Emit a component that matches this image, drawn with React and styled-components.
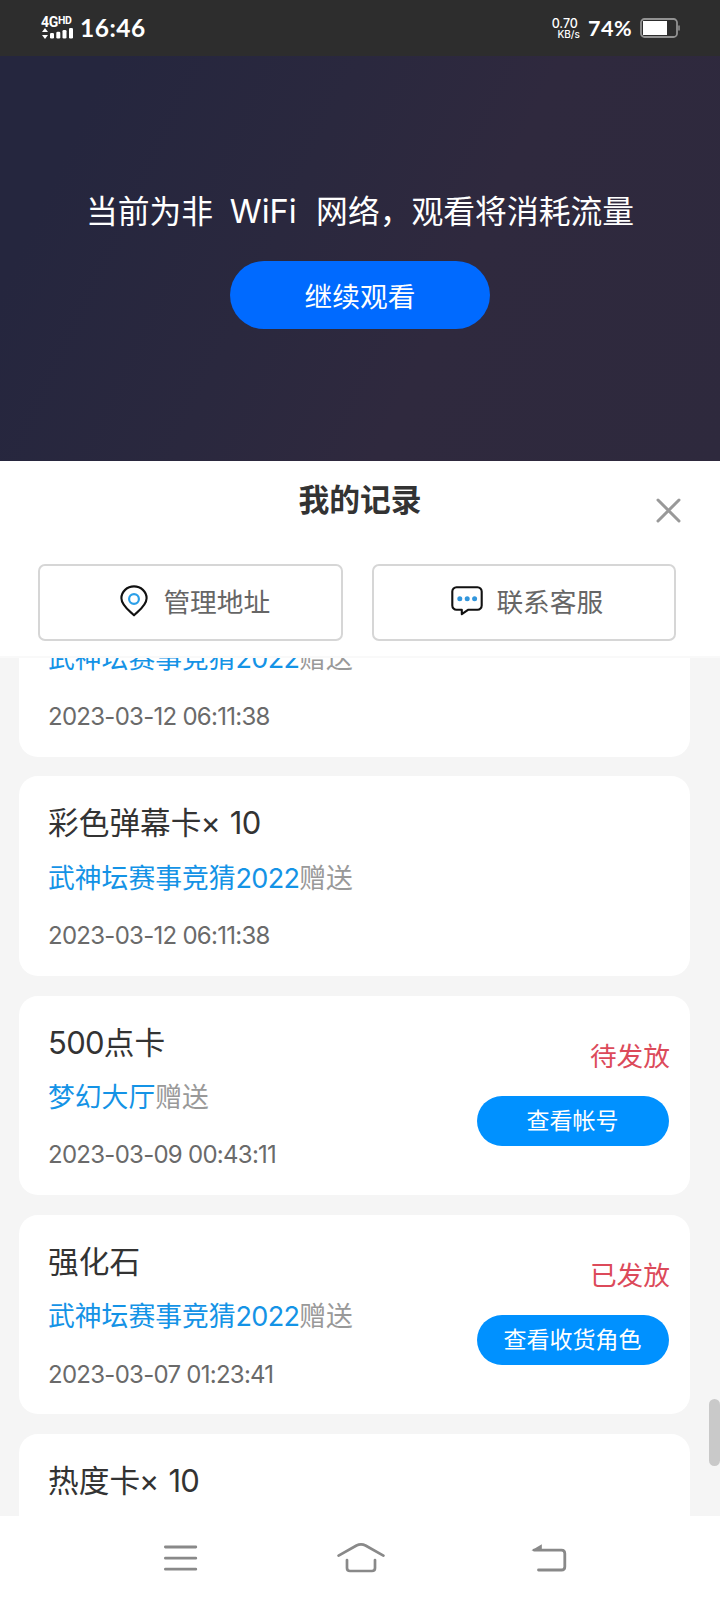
import React from "react";
import styled, { createGlobalStyle } from "styled-components";

const GlobalStyle = createGlobalStyle`
  * {
    box-sizing: border-box;
  }
  body {
    margin: 0;
    background: #ffffff;
    font-family: "Noto Sans CJK SC", sans-serif;
  }
  button {
    padding: 0;
    border: none;
    background: none;
    font-family: inherit;
  }
`;

const Screen = styled.div`
  display: flex;
  flex-direction: column;
  width: 720px;
  height: 1600px;
  overflow: hidden;
`;

/* status bar */
const StatusBar = styled.header`
  display: flex;
  align-items: center;
  justify-content: space-between;
  height: 56px;
  padding: 0 40px 0 41px;
  background: #2d2d2d;
  color: #ffffff;
  font-family: Lato, sans-serif;
`;
const StatusGroup = styled.div`
  display: flex;
  align-items: center;
`;
const Network = styled.div`
  width: 32px;
  margin-right: 7px;
`;
const NetworkLabel = styled.div`
  display: flex;
  height: 11px;
  font-family: Roboto, sans-serif;
  font-weight: 700;
  font-size: 14px;
  line-height: 10px;
  letter-spacing: -0.3px;
`;
const NetworkSup = styled.span`
  font-size: 10.5px;
  line-height: 7px;
`;
const Clock = styled.span`
  font-family: Lato, sans-serif;
  font-weight: 700;
  font-size: 24.5px;
  line-height: 28px;
  letter-spacing: 0.5px;
`;
const Speed = styled.div`
  display: flex;
  flex-direction: column;
  align-items: flex-end;
  margin-right: 8px;
  font-family: Inter, sans-serif;
  font-weight: 500;
  font-size: 12.5px;
  line-height: 12px;
`;
const SpeedValue = styled.span`
  margin-right: 2px;
`;
const SpeedUnit = styled.span`
  font-size: 10px;
  line-height: 9px;
`;
const Percent = styled.span`
  margin-right: 8px;
  font-weight: 700;
  font-size: 21.5px;
  line-height: 28px;
  letter-spacing: 0.5px;
`;

/* video area */
const Video = styled.section`
  display: flex;
  flex-direction: column;
  align-items: center;
  height: 405px;
  padding-top: 129px;
  background: linear-gradient(115deg, #25263e 12%, #2a283e 40%, #2f293e 62%, #2e293d 100%);
  color: #ffffff;
`;
const Notice = styled.p`
  height: 50px;
  margin: 0;
  font-size: 31.8px;
  line-height: 48px;
  white-space: nowrap;
`;
const Latin = styled.span`
  display: inline-block;
  width: 103px;
  padding-right: 3px;
  font-family: Inter, sans-serif;
  font-size: 32.5px;
  text-align: center;
`;
const ContinueButton = styled.button`
  width: 260px;
  height: 68px;
  margin-top: 26px;
  border-radius: 34px;
  background: #006aff;
  color: #ffffff;
  font-size: 27.7px;
  line-height: 40px;
`;

/* records panel */
const Panel = styled.section`
  height: 195px;
  background: #ffffff;
`;
const PanelHeader = styled.div`
  display: grid;
  grid-template-columns: 1fr auto 1fr;
  height: 103px;
  padding: 15px 39px 0;
`;
const PanelTitle = styled.h1`
  grid-column: 2;
  margin: 0;
  color: #333333;
  font-weight: 700;
  font-size: 30.8px;
  line-height: 44px;
`;
const CloseButton = styled.button`
  justify-self: end;
  width: 25px;
  height: 25px;
  margin-top: 22px;
`;
const Actions = styled.div`
  display: flex;
  gap: 29px;
  padding-left: 38px;
`;
const ActionButton = styled.button`
  display: flex;
  align-items: center;
  justify-content: center;
  gap: ${props => props.$gap};
  width: 304.5px;
  height: 77px;
  padding: 0 0 3px ${props => props.$indent};
  border: 2px solid #d6d6d6;
  border-radius: 7px;
  color: #666666;
  font-size: 26.7px;
  line-height: 40px;
`;

const List = styled.main`
  position: relative;
  height: 860px;
  overflow: hidden;
  border-top: 2px solid #f9f9f9;
  background: #f5f5f5;
`;
const Scroller = styled.div`
  display: flex;
  flex-direction: column;
  gap: 19.8px;
  width: 671px;
  margin: -101px 0 0 19px;
`;
const Card = styled.article`
  display: flex;
  flex: none;
  justify-content: space-between;
  height: 199.5px;
  padding: 0 20px 0 29px;
  border-radius: 19px;
  background: #ffffff;
`;
const Info = styled.div`
  padding-top: 23px;
  white-space: nowrap;
`;
const ItemName = styled.h2`
  height: 44px;
  margin: 0;
  color: #333333;
  font-weight: 400;
  font-size: 30.7px;
  line-height: 44px;
`;
const Source = styled.p`
  height: 40px;
  margin: 13.4px 0 0;
  color: #999999;
  font-size: 26.8px;
  line-height: 40px;
`;
const SourceName = styled.span`
  color: #1493e6;
`;
const Digits = styled.span`
  font-family: Inter, sans-serif;
  font-size: 1.01em;
  line-height: 1;
  letter-spacing: -0.7px;
`;
const Times = styled.span`
  margin-right: 9px;
  margin-left: -1px;
  font-family: Inter, sans-serif;
  line-height: 1;
`;
const Time = styled.time`
  display: block;
  margin-top: 22.4px;
  color: #6a6a6a;
  font-family: Inter, sans-serif;
  font-size: 24px;
  line-height: 34px;
  letter-spacing: -0.73px;
`;
const Side = styled.div`
  display: flex;
  flex-direction: column;
  align-items: flex-end;
  padding-top: 39px;
`;
const State = styled.span`
  color: #dc4a5a;
  font-size: 26.7px;
  line-height: 40px;
`;
const DetailButton = styled.button`
  width: 192px;
  height: 50px;
  margin: 21.5px 1px 0 0;
  padding: 0 1px 4px 0;
  border-radius: 25px;
  background: #0091ff;
  color: #ffffff;
  font-size: 23px;
  line-height: 34px;
`;
const ScrollThumb = styled.div`
  position: absolute;
  top: 741px;
  right: 0;
  width: 11px;
  height: 67px;
  border-radius: 6px;
  background: #c9c9c9;
`;

/* system navigation */
const NavBar = styled.nav`
  display: flex;
  align-items: center;
  justify-content: space-between;
  height: 84px;
  padding: 0 153px 0 163px;
  background: #ffffff;

  svg:nth-child(2) {
    margin-right: 8px;
  }
`;

const SignalIcon = () => (
  <svg width="32" height="11" viewBox="0 0 32 11" fill="#fff" display="block">
    <path d="M4 0l3 4H1zM4 11l3-4H1z" />
    <rect x="9" y="5" width="4" height="5.5" rx="1.3" />
    <rect x="15.3" y="3.8" width="4" height="6.7" rx="1.3" />
    <rect x="21.5" y="2" width="4" height="8.5" rx="1.3" />
    <rect x="28" y="0" width="4" height="10.5" rx="1.3" />
  </svg>
);

const BatteryIcon = () => (
  <svg width="40" height="20" viewBox="0 0 40 20" fill="none">
    <rect x="1" y="1" width="36" height="18" rx="3.5" stroke="#929292" strokeWidth="1.8" />
    <rect x="3" y="3" width="24" height="14" fill="#fff" />
    <path d="M39 7.5v5" stroke="#929292" strokeWidth="1.5" />
  </svg>
);

const CloseIcon = () => (
  <svg width="25" height="25" viewBox="0 0 25 25" stroke="#999" strokeWidth="3" strokeLinecap="round" display="block">
    <path d="M2 2l21 21M23 2L2 23" />
  </svg>
);

const PinIcon = () => (
  <svg width="28" height="32" viewBox="0 0 28 32" fill="none">
    <path
      d="M14 30.3C11 27 1.4 20.8 1.4 13.2a12.6 11.8 0 0 1 25.2 0C26.6 20.8 17 27 14 30.3z"
      stroke="#111"
      strokeWidth="2.1"
      strokeLinejoin="round"
    />
    <circle cx="14" cy="14" r="4.9" stroke="#2b9fe8" strokeWidth="2.2" />
  </svg>
);

const ChatIcon = () => (
  <svg width="32" height="30" viewBox="0 0 32 30" fill="none">
    <path
      d="M5.5 1.2h21a4.2 4.2 0 0 1 4.2 4.2v14.2a4.2 4.2 0 0 1-4.2 4.2H17l-6.2 4.4v-4.4H5.5a4.2 4.2 0 0 1-4.2-4.2V5.4a4.2 4.2 0 0 1 4.2-4.2z"
      stroke="#111"
      strokeWidth="2.1"
      strokeLinejoin="round"
    />
    <g fill="#3296dc">
      <circle cx="8.8" cy="12.8" r="2.5" />
      <circle cx="16.2" cy="12.8" r="2.5" />
      <circle cx="23.6" cy="12.8" r="2.5" />
    </g>
  </svg>
);

const MenuIcon = () => (
  <svg width="35" height="28" viewBox="0 0 35 28" stroke="#898989" strokeWidth="2.8" strokeLinecap="round">
    <path d="M2.4 3h30.4M2.4 14.2h30.4M2.4 25.2h30.4" />
  </svg>
);

const HomeIcon = () => (
  <svg width="48" height="30" viewBox="0 0 48 30" fill="none" stroke="#898989" strokeWidth="2.7" strokeLinecap="round" strokeLinejoin="round">
    <path d="M1.6 12.7L19.5 2.5Q24 .4 28.5 2.5L46.4 12.7" />
    <path d="M10 17v8q0 3 3 3h22q3 0 3-3v-8" />
  </svg>
);

const BackIcon = () => (
  <svg width="36" height="29" viewBox="0 0 36 29" fill="none" stroke="#898989" strokeWidth="2.8" strokeLinecap="round">
    <path d="M3 6.1h27.5q3.3 0 3.3 3.3v13.3q0 3.3-3.3 3.3H7.5" />
    <path d="M.4 6.5L10.8.2v6.6z" fill="#898989" stroke="none" />
  </svg>
);

const records = [
  { source: "武神坛赛事竞猜", year: "2022", time: "2023-03-12 06:11:38" },
  { name: "彩色弹幕卡", count: "10", source: "武神坛赛事竞猜", year: "2022", time: "2023-03-12 06:11:38" },
  { prefix: "500", name: "点卡", source: "梦幻大厅", time: "2023-03-09 00:43:11", state: "待发放", action: "查看帐号" },
  { name: "强化石", source: "武神坛赛事竞猜", year: "2022", time: "2023-03-07 01:23:41", state: "已发放", action: "查看收货角色" },
  { name: "热度卡", count: "10" }
];

const Record = ({ prefix, name, count, source, year, time, state, action }) => (
  <Card>
    <Info>
      <ItemName>
        {prefix && <Digits>{prefix}</Digits>}
        {name}
        {count && <Times>×</Times>}
        {count && <Digits>{count}</Digits>}
      </ItemName>
      {source && (
        <Source>
          <SourceName>
            {source}
            {year && <Digits>{year}</Digits>}
          </SourceName>
          赠送
        </Source>
      )}
      {time && <Time>{time}</Time>}
    </Info>
    {state && (
      <Side>
        <State>{state}</State>
        <DetailButton>{action}</DetailButton>
      </Side>
    )}
  </Card>
);

export default function App() {
  return (
    <Screen>
      <GlobalStyle />
      <StatusBar>
        <StatusGroup>
          <Network>
            <NetworkLabel>
              4G<NetworkSup>HD</NetworkSup>
            </NetworkLabel>
            <SignalIcon />
          </Network>
          <Clock>16:46</Clock>
        </StatusGroup>
        <StatusGroup>
          <Speed>
            <SpeedValue>0.70</SpeedValue>
            <SpeedUnit>KB/s</SpeedUnit>
          </Speed>
          <Percent>74%</Percent>
          <BatteryIcon />
        </StatusGroup>
      </StatusBar>

      <Video>
        <Notice>
          当前为非<Latin>WiFi</Latin>网络，观看将消耗流量
        </Notice>
        <ContinueButton>继续观看</ContinueButton>
      </Video>

      <Panel>
        <PanelHeader>
          <PanelTitle>我的记录</PanelTitle>
          <CloseButton>
            <CloseIcon />
          </CloseButton>
        </PanelHeader>
        <Actions>
          <ActionButton $gap="15px" $indent="10px">
            <PinIcon />
            管理地址
          </ActionButton>
          <ActionButton $gap="13px" $indent="7px">
            <ChatIcon />
            联系客服
          </ActionButton>
        </Actions>
      </Panel>

      <List>
        <Scroller>
          {records.map((record, index) => (
            <Record key={index} {...record} />
          ))}
        </Scroller>
        <ScrollThumb />
      </List>

      <NavBar>
        <MenuIcon />
        <HomeIcon />
        <BackIcon />
      </NavBar>
    </Screen>
  );
}
